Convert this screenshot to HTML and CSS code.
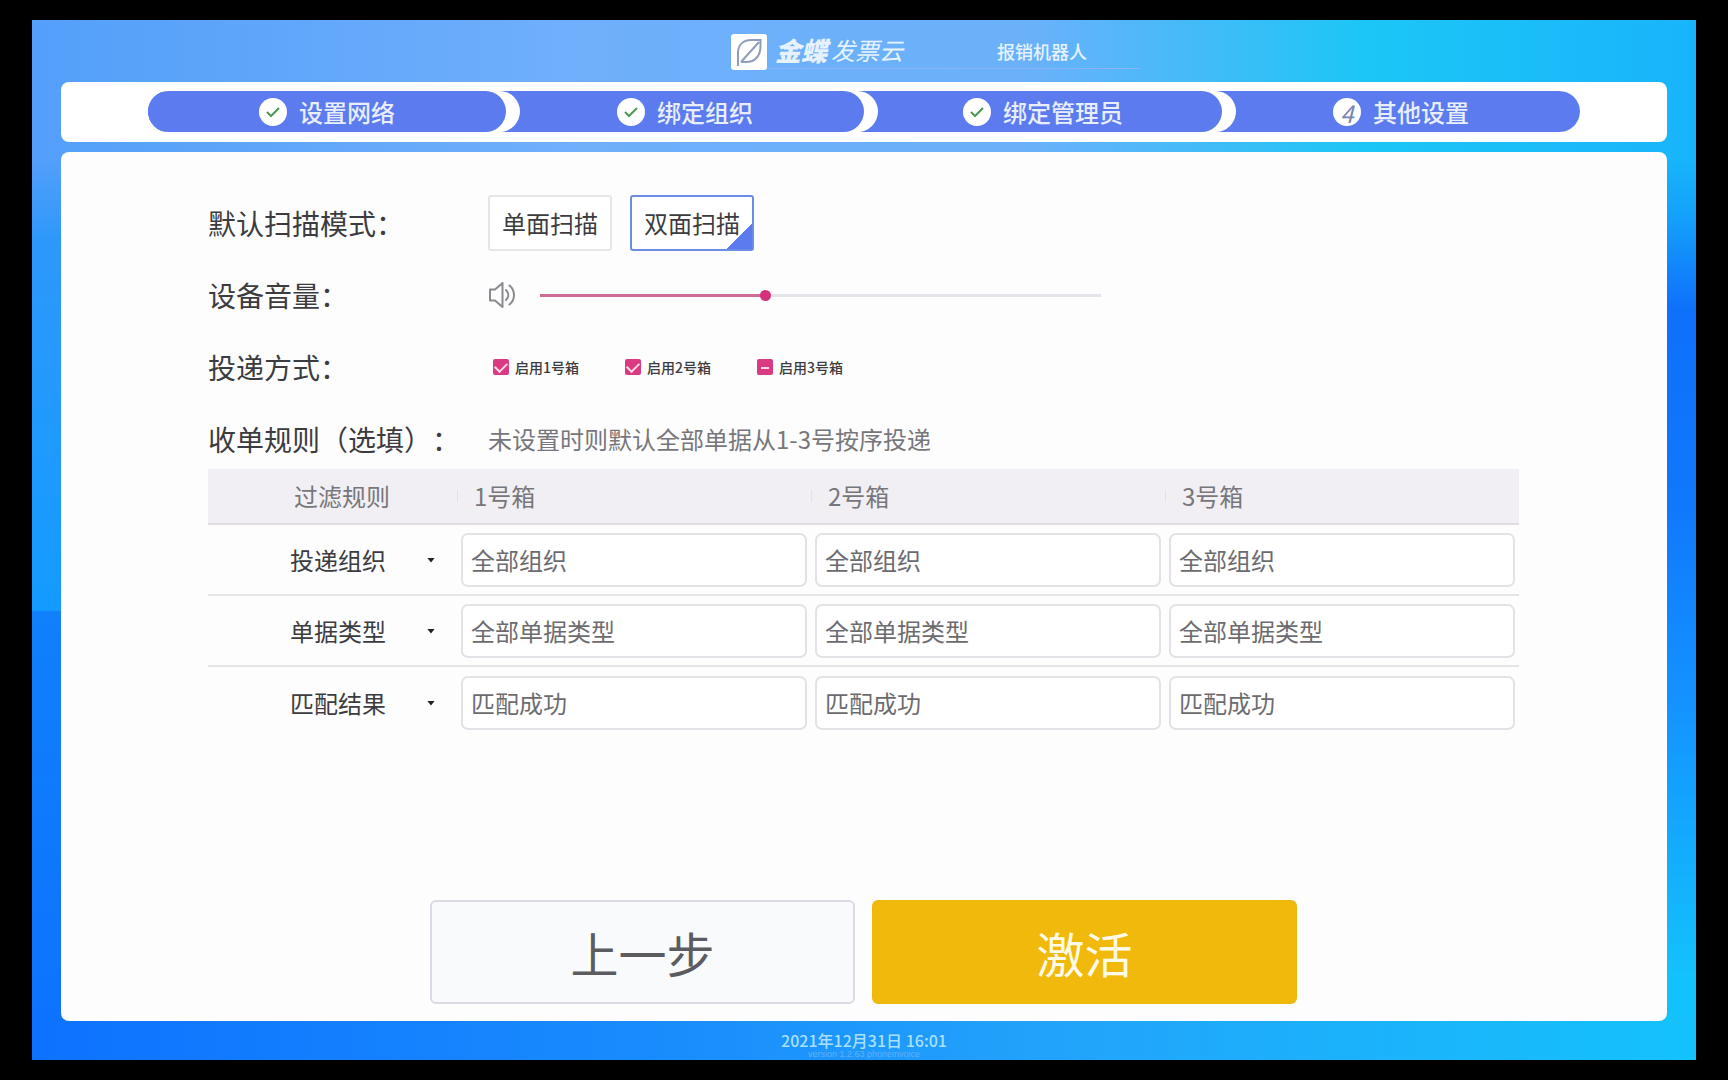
FILE: index.html
```html
<!DOCTYPE html>
<html lang="zh-CN">
<head>
<meta charset="utf-8">
<title>报销机器人 - 其他设置</title>
<link rel="stylesheet" href="styles.css">
</head>
<body>
<div class="screen">
  <header class="brand">
    <svg class="logo" viewBox="0 0 36 36" aria-hidden="true">
      <rect width="36" height="36" rx="3" fill="#fff"/>
      <path d="M7 32V19C7 10 13 6 20 6h9.500v6C29.500 22 24 28 15 28h-5M10 28 28 8" fill="none" stroke="#8e9dbd" stroke-width="2"/>
    </svg>
    <span class="brand-name"><strong>金蝶</strong>发票云</span>
    <span class="product">报销机器人</span>
  </header>

  <nav class="steps-bar">
    <ol class="steps">
      <li class="step"><svg class="badge" viewBox="0 0 28 28" aria-hidden="true"><circle cx="14" cy="14" r="14" fill="#fff"/><path d="m8 14 4 4 8-8" fill="none" stroke="#4c9a52" stroke-width="2"/></svg>设置网络</li>
      <li class="step"><svg class="badge" viewBox="0 0 28 28" aria-hidden="true"><circle cx="14" cy="14" r="14" fill="#fff"/><path d="m8 14 4 4 8-8" fill="none" stroke="#4c9a52" stroke-width="2"/></svg>绑定组织</li>
      <li class="step"><svg class="badge" viewBox="0 0 28 28" aria-hidden="true"><circle cx="14" cy="14" r="14" fill="#fff"/><path d="m8 14 4 4 8-8" fill="none" stroke="#4c9a52" stroke-width="2"/></svg>绑定管理员</li>
      <li class="step"><span class="badge number">4</span>其他设置</li>
    </ol>
  </nav>

  <main class="panel">
    <div class="row">
      <span class="label">默认扫描模式：</span>
      <div class="modes">
        <button type="button" class="mode">单面扫描</button>
        <button type="button" class="mode selected" aria-pressed="true">双面扫描</button>
      </div>
    </div>
    <div class="row">
      <label class="label" for="volume">设备音量：</label>
      <svg class="speaker" viewBox="0 0 28 28" aria-hidden="true">
        <path d="M2 8.500h5L14.500 2v24L7 19.500H2zM18 9c3 3 3 7 0 10M21.500 4.500c6 5 6 14 0 19" fill="none" stroke="#8a8a90" stroke-width="2" stroke-linejoin="round" stroke-linecap="round"/>
      </svg>
      <input class="volume" id="volume" type="range" min="0" max="100" value="40">
    </div>
    <div class="row">
      <span class="label">投递方式：</span>
      <div class="boxes">
        <label class="box"><input type="checkbox" checked>启用1号箱</label>
        <label class="box"><input type="checkbox" checked>启用2号箱</label>
        <label class="box"><input type="checkbox" class="partial" checked>启用3号箱</label>
      </div>
    </div>
    <div class="row">
      <span class="label">收单规则（选填）：</span>
      <span class="hint">未设置时则默认全部单据从1-3号按序投递</span>
    </div>

    <table class="rules">
      <thead>
        <tr><th class="filter">过滤规则</th><th>1号箱</th><th>2号箱</th><th>3号箱</th></tr>
      </thead>
      <tbody>
        <tr>
          <td><div class="picker"><select aria-label="过滤规则一"><option>投递组织</option></select></div></td>
          <td><input type="text" aria-label="1号箱投递组织" value="全部组织"></td>
          <td><input type="text" aria-label="2号箱投递组织" value="全部组织"></td>
          <td><input type="text" aria-label="3号箱投递组织" value="全部组织"></td>
        </tr>
        <tr>
          <td><div class="picker"><select aria-label="过滤规则二"><option>单据类型</option></select></div></td>
          <td><input type="text" aria-label="1号箱单据类型" value="全部单据类型"></td>
          <td><input type="text" aria-label="2号箱单据类型" value="全部单据类型"></td>
          <td><input type="text" aria-label="3号箱单据类型" value="全部单据类型"></td>
        </tr>
        <tr>
          <td><div class="picker"><select aria-label="过滤规则三"><option>匹配结果</option></select></div></td>
          <td><input type="text" aria-label="1号箱匹配结果" value="匹配成功"></td>
          <td><input type="text" aria-label="2号箱匹配结果" value="匹配成功"></td>
          <td><input type="text" aria-label="3号箱匹配结果" value="匹配成功"></td>
        </tr>
      </tbody>
    </table>

    <div class="actions">
      <button type="button" class="action back">上一步</button>
      <button type="button" class="action activate">激活</button>
    </div>
  </main>

  <footer class="status">
    <time class="clock" datetime="2021-12-31T16:01">2021年12月31日 16:01</time>
    <span class="version">version 1.2.63 phoneinvoice</span>
  </footer>
</div>
</body>
</html>
```
FILE: styles.css
```css
* {
  box-sizing: border-box;
}

body {
  margin: 0;
  min-height: 100vh;
  padding: 20px 32px;
  display: flex;
  background: #000;
  color: #3c3c40;
  font-family: "Noto Sans CJK SC", sans-serif;
  font-size: 24px;
  line-height: 36px;
}

button,
input,
select {
  font: inherit;
  color: inherit;
  margin: 0;
}

/* The backdrop shows only as a band round the panels: top, bottom, left, right. */
.screen {
  flex: 1;
  display: flex;
  flex-direction: column;
  padding: 0 29px;
  background:
    linear-gradient(to right, #539ffa, #6faffb 32%, #6ab1fa 60%, #1cc6f6 80%, #18b4fb) top / 100% 140px no-repeat,
    linear-gradient(to right, #0d72ff, #1a8efd 40%, #22a2fb 60%, #14c2fb) bottom / 100% 48px no-repeat,
    linear-gradient(to bottom, #539ffa 140px, #2d98fa 220px, #149bff 590px, #1080fb 592px, #0d72ff) left / 50% 100% no-repeat,
    linear-gradient(to bottom, #18b4fb 140px, #149ffa 200px, #0f70fa 290px, #1078fb 480px, #1492ff 680px, #14c2fb 960px) right / 50% 100% no-repeat;
}

.brand {
  height: 62px;
  display: flex;
  align-items: center;
  justify-content: center;
  padding: 2px 0 0 90px;
  background: linear-gradient(#8ab4f5, #8ab4f5) 57% 48px / 380px 1px no-repeat;
  color: #e6f3ff;
  line-height: 32px;
}

.logo {
  width: 36px;
  height: 36px;
}

.brand-name {
  display: flex;
  gap: 4px;
  margin: 0 94px 4px 8px;
  font-style: italic;
}

.brand-name strong {
  font-size: 26px;
  font-weight: 900;
}

.product {
  margin-bottom: 2px;
  font-size: 18px;
  font-weight: 500;
}

.steps-bar {
  padding: 9px 87px 10px;
  background: #fff;
  border-radius: 8px;
}

.steps {
  display: flex;
  margin: 0;
  padding: 0;
  list-style: none;
  border-radius: 21px;
  background: #5b7bef;
  overflow: hidden;
}

.step {
  position: relative;
  flex: 1;
  height: 41px;
  display: flex;
  align-items: center;
  justify-content: center;
  gap: 12px;
  border-radius: 0 21px 21px 0;
  background: #5b7bef;
  box-shadow: 14px 0 0 #fff;
  color: #e9eefe;
  font-weight: 500;
}

.step:nth-child(1) { z-index: 4; }
.step:nth-child(2) { z-index: 3; }
.step:nth-child(3) { z-index: 2; }

.badge {
  width: 28px;
  height: 28px;
}

.number {
  border-radius: 50%;
  background: #fff;
  color: #7884b8;
  line-height: 30px;
  text-align: center;
  font-style: italic;
  font-weight: 400;
}

.panel {
  flex: 1;
  display: flex;
  flex-direction: column;
  margin-top: 10px;
  padding: 35px 148px 17px 147px;
  background: #fdfdfe;
  border-radius: 8px;
}

.row {
  display: flex;
  align-items: center;
  height: 72px;
}

.label {
  width: 280px;
  font-size: 28px;
  text-spacing-trim: space-all;
  font-feature-settings: "chws" 0;
}

.modes {
  display: flex;
  gap: 18px;
}

.mode {
  width: 124px;
  height: 56px;
  padding: 0;
  border: 2px solid #e8e5ea;
  border-radius: 3px;
  background: #fff;
}

.mode.selected {
  border-color: #6d8ce6;
  background: linear-gradient(135deg, #fff 0 85%, #5b7bef 85%);
}

.speaker {
  width: 28px;
  height: 28px;
}

.volume {
  appearance: none;
  width: 561px;
  height: 12px;
  margin-left: 24px;
  background: linear-gradient(to right, #cf6c95 40%, #e6e3ea 40%) center / 100% 3px no-repeat;
}

.volume::-webkit-slider-thumb {
  appearance: none;
  width: 11px;
  height: 11px;
  border-radius: 50%;
  background: #d6307a;
}

.boxes {
  display: flex;
  padding-left: 5px;
}

.box {
  display: flex;
  align-items: center;
  gap: 6px;
  width: 132px;
  font-size: 14px;
  font-weight: 500;
}

.box input {
  appearance: none;
  display: grid;
  place-items: center;
  width: 16px;
  height: 16px;
  border-radius: 2px;
  background: #d93a82;
}

.box input::before {
  content: "";
  width: 10px;
  height: 6px;
  margin-bottom: 3px;
  border: solid #ffd9ea;
  border-width: 0 0 2px 2px;
  rotate: -45deg;
}

.box .partial::before {
  width: 8px;
  height: 2px;
  margin: 0;
  border-width: 0 0 2px;
  rotate: 0deg;
}

.hint {
  color: #77777b;
}

.rules {
  width: 100%;
  margin-top: -6px;
  table-layout: fixed;
  border-collapse: separate;
  border-spacing: 0;
}

.rules th {
  height: 56px;
  padding: 0 17px;
  border-bottom: 2px solid #dfdce2;
  background: linear-gradient(#e4e1e6, #e4e1e6) left center / 1px 12px no-repeat #f1eff3;
  color: #77777b;
  font-weight: 400;
  text-align: left;
}

.rules .filter {
  width: 249px;
  padding-left: 86px;
  background: #f1eff3;
}

.rules td {
  height: 71px;
  padding: 8px 4px 7px;
  border-bottom: 2px solid #e6e3e9;
}

.rules tr:last-child td {
  border-bottom: 0;
}

.rules input {
  display: block;
  width: 100%;
  height: 54px;
  padding: 0 8px 2px;
  border: 2px solid #e4e2e7;
  border-radius: 7px;
  background: #fff;
  color: #6c6c70;
}

.picker {
  display: flex;
  align-items: center;
}

.picker::after {
  content: "";
  width: 8px;
  height: 5px;
  background: #222;
  clip-path: polygon(0 0, 100% 0, 50% 100%);
}

.picker select {
  appearance: none;
  width: 215px;
  padding: 0 0 0 78px;
  border: 0;
  background: none;
}

.actions {
  display: flex;
  justify-content: center;
  gap: 17px;
  margin-top: auto;
}

.action {
  width: 425px;
  height: 104px;
  border: 2px solid #dadae4;
  border-radius: 6px;
  background: #f9fafc;
  color: #5c5c60;
  font-size: 48px;
}

.action.activate {
  border-color: #edb90c;
  background: #f0b90b;
  color: #fffbe8;
}

.status {
  height: 39px;
  display: flex;
  flex-direction: column;
  align-items: center;
  padding-top: 10px;
  color: #a9e0ff;
}

.clock {
  font-size: 16px;
  font-weight: 500;
  line-height: 18px;
}

.version {
  color: #5fb0f8;
  font-family: "Liberation Sans", sans-serif;
  font-size: 9px;
  line-height: 10px;
}
```
